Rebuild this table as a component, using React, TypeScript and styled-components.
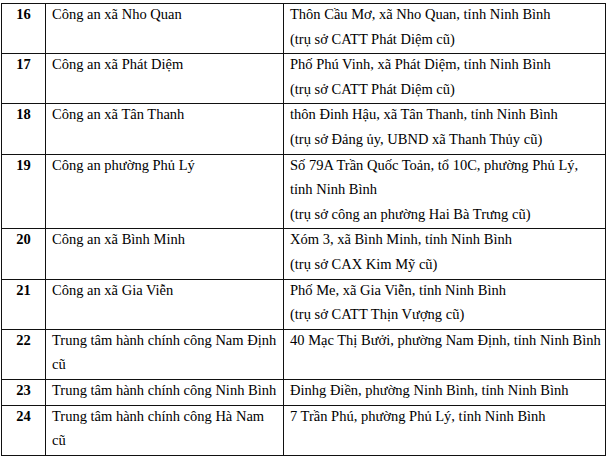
import React from 'react'
import styled, { createGlobalStyle } from 'styled-components'

const GlobalStyle = createGlobalStyle`
  html, body {
    margin: 0;
    padding: 0;
    background: #ffffff;
  }
  body {
    font-family: 'Liberation Serif', 'Times New Roman', serif;
    color: #000000;
  }
`

const Page = styled.div`
  padding: 3px 0 0 1px;
`

const Table = styled.table`
  border-collapse: collapse;
  table-layout: fixed;
  width: 604px;
  font-size: 14.5px;
  line-height: 24.6px;
`

const Cell = styled.td<{ $width: number; $bold?: boolean; $center?: boolean }>`
  box-sizing: border-box;
  width: ${p => p.$width}px;
  border: 1px solid #111111;
  padding: ${p => (p.$center ? '0' : '0 3px 0 6px')};
  vertical-align: top;
  font-weight: ${p => (p.$bold ? 700 : 400)};
  text-align: ${p => (p.$center ? 'center' : 'left')};
`

const Content = styled.div`
  margin: -2px 0 2px;
`

const Para = styled.div``

type Row = {
  no: number
  name: string
  address: string[]
}

const rows: Row[] = [
  {
    no: 16,
    name: 'Công an xã Nho Quan',
    address: ['Thôn Cầu Mơ, xã Nho Quan, tỉnh Ninh Bình', '(trụ sở CATT Phát Diệm cũ)'],
  },
  {
    no: 17,
    name: 'Công an xã Phát Diệm',
    address: ['Phố Phú Vinh, xã Phát Diệm, tỉnh Ninh Bình', '(trụ sở CATT Phát Diệm cũ)'],
  },
  {
    no: 18,
    name: 'Công an xã Tân Thanh',
    address: ['thôn Đinh Hậu, xã Tân Thanh, tỉnh Ninh Bình', '(trụ sở Đảng ủy, UBND xã Thanh Thủy cũ)'],
  },
  {
    no: 19,
    name: 'Công an phường Phủ Lý',
    address: ['Số 79A Trần Quốc Toản, tổ 10C, phường Phủ Lý, tỉnh Ninh Bình', '(trụ sở công an phường Hai Bà Trưng cũ)'],
  },
  {
    no: 20,
    name: 'Công an xã Bình Minh',
    address: ['Xóm 3, xã Bình Minh, tỉnh Ninh Bình', '(trụ sở CAX Kim Mỹ cũ)'],
  },
  {
    no: 21,
    name: 'Công an xã Gia Viễn',
    address: ['Phố Me, xã Gia Viễn, tỉnh Ninh Bình', '(trụ sở CATT Thịn Vượng cũ)'],
  },
  {
    no: 22,
    name: 'Trung tâm hành chính công Nam Định cũ',
    address: ['40 Mạc Thị Bưởi, phường Nam Định, tỉnh Ninh Bình'],
  },
  {
    no: 23,
    name: 'Trung tâm hành chính công Ninh Bình',
    address: ['Đinhg Điền, phường Ninh Bình, tỉnh Ninh Bình'],
  },
  {
    no: 24,
    name: 'Trung tâm hành chính công Hà Nam cũ',
    address: ['7 Trần Phú, phường Phủ Lý, tỉnh Ninh Bình'],
  },
]

export default function App() {
  return (
    <>
      <GlobalStyle />
      <Page>
        <Table>
          <tbody>
            {rows.map(r => (
              <tr key={r.no}>
                <Cell $width={44} $bold $center>
                  <Content>{r.no}</Content>
                </Cell>
                <Cell $width={238}>
                  <Content>{r.name}</Content>
                </Cell>
                <Cell $width={322}>
                  <Content>
                    {r.address.map((a, i) => (
                      <Para key={i}>{a}</Para>
                    ))}
                  </Content>
                </Cell>
              </tr>
            ))}
          </tbody>
        </Table>
      </Page>
    </>
  )
}
